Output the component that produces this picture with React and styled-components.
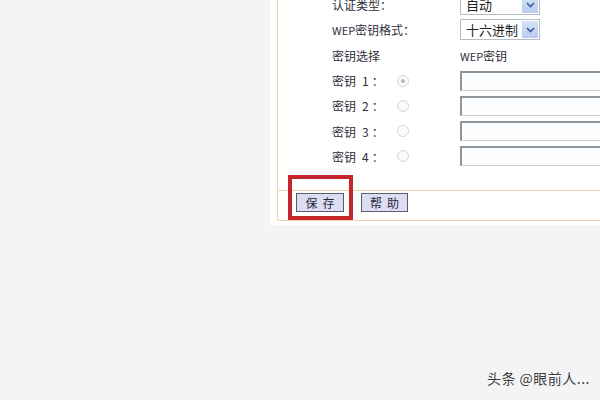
import styled, { createGlobalStyle } from 'styled-components';

const GlobalStyle = createGlobalStyle`
  * {
    margin: 0;
    padding: 0;
    box-sizing: border-box;
  }

  body {
    background-color: #f4f4f6;
    font-family: "Noto Sans CJK SC", "Liberation Sans", sans-serif;
    overflow: hidden;
  }
`;

const Page = styled.div`
  position: relative;
  width: 600px;
  height: 400px;
  padding-left: 270px;
  overflow: hidden;
`;

const Panel = styled.div`
  background: #ffffff;
  margin-top: -8px;
  padding: 0 0 4px 7px;
`;

const Frame = styled.div`
  border-left: 1px solid #ead7b2;
  border-bottom: 1px solid #ead7b2;
`;

const Form = styled.div`
  display: flex;
  flex-direction: column;
  padding-left: 54px;
  padding-bottom: 21px;
`;

const Row = styled.div`
  display: grid;
  grid-template-columns: 64px 64px 1fr;
  align-items: center;
  height: 25.3px;
  font-size: 12px;
  color: #2e2f3a;
`;

const Label = styled.span`
  font-size: ${(p) => (p.small ? '11px' : '12px')};
  white-space: nowrap;
`;

const Num = styled.span`
  margin: 0 3px 0 6px;
`;

const Wide = styled.span`
  grid-column: 1 / 3;
  white-space: nowrap;
`;

const Radio = styled.span`
  justify-self: start;
  margin-left: 1px;
  width: 12px;
  height: 12px;
  border-radius: 50%;
  border: 1px solid #d6d6d8;
  background: #fbfbfb;
  display: flex;
  align-items: center;
  justify-content: center;

  &::after {
    content: '';
    width: 4px;
    height: 4px;
    border-radius: 50%;
    background: ${(p) => (p.checked ? '#b8b8bc' : 'transparent')};
  }
`;

const Select = styled.div`
  display: flex;
  align-items: center;
  width: 80px;
  height: 21px;
  border: 1px solid #b6bcc6;
  background: #fff;
`;

const SelectText = styled.span`
  flex: 1;
  padding-left: 5px;
  font-size: 13px;
  color: #1e1e24;
`;

const Arrow = styled.span`
  width: 16px;
  height: 17px;
  margin-right: 1px;
  background: linear-gradient(#d6e2f6, #b8ccec);
  display: flex;
  align-items: center;
  justify-content: center;
`;

const KeyInput = styled.div`
  width: 160px;
  height: 20px;
  border-top: 2px solid #8e959c;
  border-left: 2px solid #8e959c;
  border-bottom: 1px solid #c9ced2;
  border-right: 1px solid #c9ced2;
  background: #fdfeff;
`;

const Footer = styled.div`
  display: flex;
  gap: 17px;
  align-items: center;
  border-top: 1px solid #ead7b2;
  padding: 2px 0 8px 18px;
`;

const ButtonWrap = styled.div`
  position: relative;
  display: flex;
`;

const Button = styled.button`
  display: block;
  width: ${(p) => p.w}px;
  height: 19px;
  border: 1px solid #5a5f6e;
  background: #dcdcf2;
  font-family: "Noto Sans CJK SC", sans-serif;
  font-size: 12px;
  letter-spacing: 5px;
  padding-left: 5px;
  color: #2a2a36;
  line-height: 17px;
`;

const Highlight = styled.div`
  position: absolute;
  left: -8px;
  right: -9px;
  top: -18px;
  bottom: -8px;
  border: 4px solid #c4262c;
  pointer-events: none;
`;

const Watermark = styled.div`
  position: absolute;
  right: 10px;
  bottom: 12px;
  font-size: 14px;
  color: #3c3c40;
  text-shadow: 0 0 2px #fff;
  letter-spacing: 0.5px;
`;

function Chevron() {
  return (
    <svg width="9" height="6" viewBox="0 0 9 6">
      <path d="M1 1 L4.5 4.5 L8 1" fill="none" stroke="#3d5a99" strokeWidth="1.6" />
    </svg>
  );
}

const keys = [1, 2, 3, 4];

function App() {
  return (
    <Page>
      <GlobalStyle />
      <Panel>
        <Frame>
          <Form>
            <Row>
              <Wide>认证类型：</Wide>
              <Select>
                <SelectText>自动</SelectText>
                <Arrow><Chevron /></Arrow>
              </Select>
            </Row>
            <Row>
              <Wide><Label small>WEP</Label>密钥格式：</Wide>
              <Select>
                <SelectText>十六进制</SelectText>
                <Arrow><Chevron /></Arrow>
              </Select>
            </Row>
            <Row>
              <Label>密钥选择</Label>
              <span />
              <Label><Label small>WEP</Label>密钥</Label>
            </Row>
            {keys.map((k) => (
              <Row key={k}>
                <Label>密钥<Num>{k}</Num>：</Label>
                <Radio checked={k === 1} />
                <KeyInput />
              </Row>
            ))}
          </Form>
          <Footer>
            <ButtonWrap>
              <Button w={48}>保存</Button>
              <Highlight />
            </ButtonWrap>
            <Button w={47}>帮助</Button>
          </Footer>
        </Frame>
      </Panel>
      <Watermark>头条 @眼前人...</Watermark>
    </Page>
  );
}

export default App;
